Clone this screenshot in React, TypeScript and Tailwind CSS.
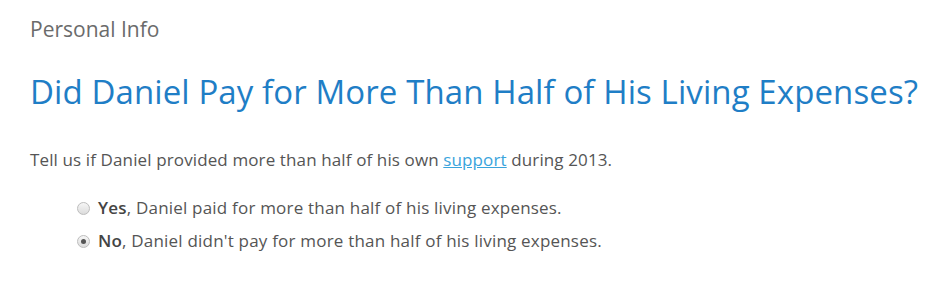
export default function App() {
  return (
    <div
      className="w-[950px] h-[293px] bg-white pl-[30px] pt-[16px]"
      style={{ fontFamily: "'Open Sans', Lato, sans-serif" }}
    >
      <div className="text-[21px] leading-[26px] text-[#6b6b6b]">Personal Info</div>
      <h1 className="mt-[30px] text-[33px] leading-[40px] tracking-[0.1px] text-[#1f7ec6]">
        Did Daniel Pay for More Than Half of His Living Expenses?
      </h1>
      <p className="mt-[36px] text-[17px] leading-[24px] tracking-[0.12px] text-[#555]">
        Tell us if Daniel provided more than half of his own{" "}
        <a href="#" className="text-[#3aa4dc] underline">
          support
        </a>{" "}
        during 2013.
      </p>
      <div className="mt-[24px] ml-[47px] flex flex-col gap-[9px] text-[17px] leading-[24px] tracking-[0.2px] text-[#555]">
        <label className="flex items-center gap-[8px]">
          <Radio checked={false} />
          <span>
            <b className="font-semibold text-[#444]">Yes</b>, Daniel paid for more than half of his living expenses.
          </span>
        </label>
        <label className="flex items-center gap-[8px]">
          <Radio checked />
          <span>
            <b className="font-semibold text-[#444]">No</b>, Daniel didn't pay for more than half of his living expenses.
          </span>
        </label>
      </div>
    </div>
  );
}

function Radio({ checked }: { checked: boolean }) {
  return (
    <span className="w-[13px] h-[13px] rounded-full border border-[#bdbdbd] bg-gradient-to-b from-[#f6f6f6] to-[#dcdcdc] flex items-center justify-center">
      {checked && <span className="w-[5px] h-[5px] rounded-full bg-[#555]" />}
    </span>
  );
}
